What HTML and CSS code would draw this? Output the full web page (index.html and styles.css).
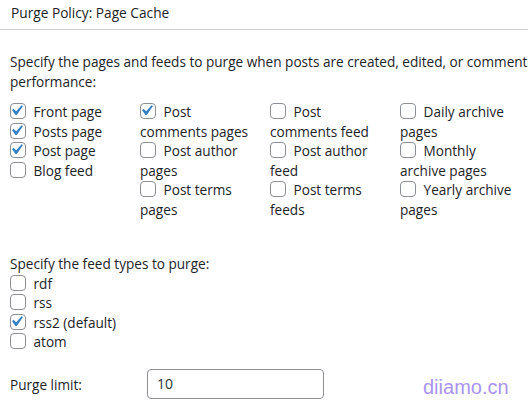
FILE: index.html
```html
<!DOCTYPE html>
<html lang="en">
<head>
<meta charset="utf-8">
<title>Purge Policy: Page Cache</title>
<link rel="stylesheet" href="styles.css">
</head>
<body>
<div class="panel">
  <h2 class="panel-title">Purge Policy: Page Cache</h2>
  <div class="panel-body">
    <p class="desc lead">Specify the pages and feeds to purge when posts are created, edited, or comments posted. The defaults are recommended because additional options may reduce server<br>performance:</p>
    <div class="grid">
      <div class="col">
        <label class="opt"><span class="cb"><svg viewBox="0 0 20 20"><path d="M14.83 4.89l1.34.94-5.81 8.38H9.02L5.78 9.67l1.34-1.25 2.57 2.4z"/></svg></span> Front page</label>
        <label class="opt"><span class="cb"><svg viewBox="0 0 20 20"><path d="M14.83 4.89l1.34.94-5.81 8.38H9.02L5.78 9.67l1.34-1.25 2.57 2.4z"/></svg></span> Posts page</label>
        <label class="opt"><span class="cb"><svg viewBox="0 0 20 20"><path d="M14.83 4.89l1.34.94-5.81 8.38H9.02L5.78 9.67l1.34-1.25 2.57 2.4z"/></svg></span> Post page</label>
        <label class="opt"><span class="cb"></span> Blog feed</label>
      </div>
      <div class="col">
        <label class="opt"><span class="cb"><svg viewBox="0 0 20 20"><path d="M14.83 4.89l1.34.94-5.81 8.38H9.02L5.78 9.67l1.34-1.25 2.57 2.4z"/></svg></span> Post comments pages</label>
        <label class="opt"><span class="cb"></span> Post author pages</label>
        <label class="opt"><span class="cb"></span> Post terms pages</label>
      </div>
      <div class="col">
        <label class="opt"><span class="cb"></span> Post comments feed</label>
        <label class="opt"><span class="cb"></span> Post author feed</label>
        <label class="opt"><span class="cb"></span> Post terms feeds</label>
      </div>
      <div class="col">
        <label class="opt"><span class="cb"></span> Daily archive pages</label>
        <label class="opt"><span class="cb"></span> Monthly archive pages</label>
        <label class="opt"><span class="cb"></span> Yearly archive pages</label>
      </div>
    </div>
    <p class="desc feeds-title">Specify the feed types to purge:</p>
    <div class="feeds">
      <label class="opt"><span class="cb"></span> rdf</label>
      <label class="opt"><span class="cb"></span> rss</label>
      <label class="opt"><span class="cb"><svg viewBox="0 0 20 20"><path d="M14.83 4.89l1.34.94-5.81 8.38H9.02L5.78 9.67l1.34-1.25 2.57 2.4z"/></svg></span> rss2 (default)</label>
      <label class="opt"><span class="cb"></span> atom</label>
    </div>
    <div class="field">
      <label class="field-label" for="limit">Purge limit:</label>
      <input class="text-input" id="limit" type="text" value="10">
    </div>
  </div>
  <div class="watermark">diiamo.cn</div>
</div>
</body>
</html>
```
FILE: styles.css
```css
html, body {
  margin: 0;
  padding: 0;
  background: #fff;
}
body {
  font-family: "Open Sans", "Noto Sans", "Liberation Sans", sans-serif;
  font-size: 13.6px;
  line-height: 19.5px;
  color: #1d2327;
}
.panel {
  position: relative;
  width: 528px;
  height: 408px;
  overflow: hidden;
}
.panel-title {
  margin: 0;
  height: 29px;
  padding-left: 11px;
  font-size: 13.7px;
  font-weight: 400;
  line-height: 25px;
  border-bottom: 1px solid #cfcfd1;
  white-space: nowrap;
}
.panel-body {
  padding: 0 10px;
}
.desc {
  margin: 22px 0 0;
}
.lead {
  white-space: nowrap;
}
.grid {
  display: grid;
  grid-template-columns: repeat(4, 120px);
  column-gap: 10px;
  margin-top: 11px;
  align-items: start;
}
.opt {
  display: block;
}
.cb {
  position: relative;
  display: inline-block;
  box-sizing: border-box;
  width: 16px;
  height: 16px;
  border: 1px solid #8c8f94;
  border-radius: 4px;
  background: #fff;
  vertical-align: middle;
  margin: -4px 4px 0 0;
}
.cb svg {
  position: absolute;
  left: -5px;
  top: -4px;
  width: 21px;
  height: 21px;
  fill: #3582c4;
}
.feeds-title {
  margin-top: 35px;
}
.field {
  display: flex;
  align-items: center;
  margin-top: 17px;
}
.field-label {
  width: 137px;
  padding-top: 2px;
}
.text-input {
  box-sizing: border-box;
  width: 177px;
  height: 30px;
  margin: 0;
  padding: 0 9px;
  border: 1px solid #8c8f94;
  border-radius: 4px;
  font-family: "Open Sans", "Noto Sans", sans-serif;
  font-size: 14px;
  color: #2c3338;
  background: #fff;
}
.watermark {
  position: absolute;
  left: 423px;
  top: 374px;
  font-family: "Liberation Sans", Arial, sans-serif;
  font-size: 20px;
  line-height: 26px;
  color: #a994f0;
}
```
